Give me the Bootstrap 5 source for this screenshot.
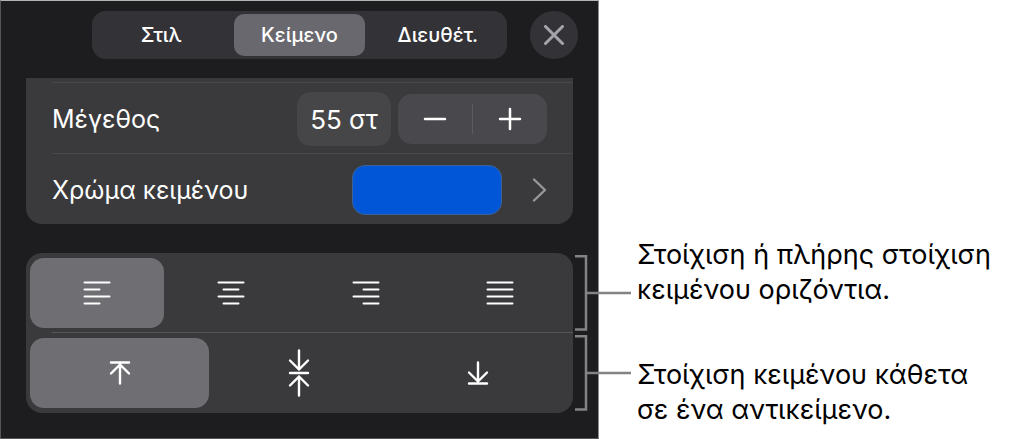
<!DOCTYPE html>
<html lang="el">
<head>
<meta charset="utf-8">
<meta name="viewport" content="width=device-width, initial-scale=1">
<title>Στοίχιση κειμένου</title>
<link rel="stylesheet" href="https://cdn.jsdelivr.net/npm/bootstrap@5.3.0/dist/css/bootstrap.min.css">
<style>
  body { font-family: Inter, "Noto Sans", sans-serif; font-size: 25px; line-height: 35px; color: #000; background: #fff; }
  svg { display: block; fill: none; stroke: currentColor; stroke-linecap: round; stroke-linejoin: round; }
  button { border: 0; padding: 0; background: transparent; color: #fff; }
  .figure-grid { display: grid; grid-template-columns: 599fr 412fr; }
  .inspector { background: #1d1d1f; color: #fff; border: 1px solid #56565a; border-top-color: #b0b6b8; border-right-color: #8c8c8e; padding: 10px 25px 25px; }
  .inspector-head { padding-left: 66px; margin-right: -5px; gap: 23px; }
  .tabs-box { background: #333236; border-radius: 14px; padding: 3px 0; height: 48px; }
  .tabs-box button { margin: 0 4px; border-radius: 10px; font-size: 20px; font-weight: 500; line-height: 24px; flex: 1 1 0; }
  .tabs-box .active { background: #69686f; }
  .close-btn { width: 48px; height: 48px; background: #333236; color: #a5a4ac; }
  .panel-box { background: #3a3a3c; }
  .text-box { margin-top: 19px; padding-top: 4px; border-radius: 0 0 16px 16px; }
  .text-row { margin-left: 26px; padding: 2px 26px 0 0; height: 71px; border-top: 1px solid #48484a; }
  .size-input { width: 94px; height: 54px; border: 0; border-radius: 14px; background: #464649; color: #fff; text-align: center; padding: 0; margin-right: 7px; font-size: 26px; }
  .stepper { width: 149px; height: 50px; border-radius: 14px; background: #49484d; }
  .stepper-line { width: 1px; height: 30px; background: #5c5b60; }
  .swatch { width: 150px; height: 50px; border-radius: 13px; background: #0056d6; border: 1px solid #3e6292; margin-right: 30px; }
  .chevron { color: #98989c; }
  .align-box { margin-top: 29px; border-radius: 16px; }
  .align-row { position: relative; padding: 5px 6px 4px 4px; }
  .align-row:last-child { padding-bottom: 5px; }
  .align-row button { height: 70px; border-radius: 14px; flex: 1 1 0; }
  .align-row .active { background: #6f6e73; }
  .row-line { height: 1px; margin-left: 26px; background: #555557; }
  .bracket { position: absolute; left: 100%; top: 2px; margin-left: 2px; color: #838383; stroke-linecap: butt; stroke-linejoin: miter; }
  .callouts { padding: 237px 0 0 38px; gap: 50px; font-size: 27px; }
</style>
</head>
<body>
<main class="figure-grid">
  <section class="inspector" aria-label="Μορφή">
    <div class="inspector-head d-flex align-items-center">
      <nav class="tabs-box d-flex flex-grow-1">
        <button type="button">Στιλ</button>
        <button type="button" class="active">Κείμενο</button>
        <button type="button">Διευθέτ.</button>
      </nav>
      <button type="button" class="close-btn rounded-circle d-flex align-items-center justify-content-center" aria-label="Κλείσιμο">
        <svg width="20" height="20" stroke-width="3"><path d="M1.500 1.500 18.500 18.500M18.500 1.500 1.500 18.500"/></svg>
      </button>
    </div>

    <div class="panel-box text-box">
      <div class="text-row d-flex align-items-center">
        <label for="size" class="me-auto">Μέγεθος</label>
        <input id="size" class="size-input" type="text" value="55 στ">
        <div class="stepper d-flex align-items-center">
          <button type="button" class="flex-fill h-100 d-flex align-items-center justify-content-center" aria-label="Μείωση"><svg width="24" height="24" stroke-width="2.500"><path d="M2 12H22"/></svg></button>
          <span class="stepper-line"></span>
          <button type="button" class="flex-fill h-100 d-flex align-items-center justify-content-center" aria-label="Αύξηση"><svg width="24" height="24" stroke-width="2.500"><path d="M2 12H22M12 2V22"/></svg></button>
        </div>
      </div>
      <div class="text-row d-flex align-items-center">
        <span class="me-auto">Χρώμα κειμένου</span>
        <button type="button" class="swatch" aria-label="Χρώμα κειμένου"></button>
        <button type="button" class="chevron" aria-label="Επιλογές χρώματος"><svg width="15" height="26" stroke-width="2.400"><path d="M2 2.500 13 13 2 23.500"/></svg></button>
      </div>
    </div>

    <div class="panel-box align-box">
      <div class="align-row d-flex">
        <button type="button" class="active d-flex align-items-center justify-content-center" aria-label="Αριστερά"><svg width="28" height="24" stroke-width="2"><path d="M1.500 1.500H26.500M1.500 8.500H16.500M1.500 15.500H26.500M1.500 22.500H16.500"/></svg></button>
        <button type="button" class="d-flex align-items-center justify-content-center" aria-label="Κέντρο"><svg width="28" height="24" stroke-width="2"><path d="M1.500 1.500H26.500M6.500 8.500H21.500M1.500 15.500H26.500M6.500 22.500H21.500"/></svg></button>
        <button type="button" class="d-flex align-items-center justify-content-center" aria-label="Δεξιά"><svg width="28" height="24" stroke-width="2"><path d="M1.500 1.500H26.500M11.500 8.500H26.500M1.500 15.500H26.500M11.500 22.500H26.500"/></svg></button>
        <button type="button" class="d-flex align-items-center justify-content-center" aria-label="Πλήρης"><svg width="28" height="24" stroke-width="2"><path d="M1.500 1.500H26.500M1.500 8.500H26.500M1.500 15.500H26.500M1.500 22.500H26.500"/></svg></button>
        <svg class="bracket" width="56" height="76" stroke-width="2.500"><path d="M0 1.250H11V74.500H0M11 38H56"/></svg>
      </div>
      <div class="row-line"></div>
      <div class="align-row d-flex">
        <button type="button" class="active d-flex align-items-center justify-content-center" aria-label="Πάνω"><svg width="22" height="26" stroke-width="2.400"><path d="M2 2.500H20M11 23.500V5M2 13.500 11 4.500 20 13.500"/></svg></button>
        <button type="button" class="d-flex align-items-center justify-content-center" aria-label="Μέση"><svg width="22" height="48" stroke-width="2.400"><path d="M2 24H20M11 1.500V20.500M2 11.500 11 20.500 20 11.500M11 46.500V27.500M2 36.500 11 27.500 20 36.500"/></svg></button>
        <button type="button" class="d-flex align-items-center justify-content-center" aria-label="Κάτω"><svg width="22" height="26" stroke-width="2.400"><path d="M2 23.500H20M11 2.500V21M2 12.500 11 21.500 20 12.500"/></svg></button>
        <svg class="bracket" width="56" height="76" stroke-width="2.500"><path d="M0 1.250H11V74.500H0M11 38H56"/></svg>
      </div>
    </div>
  </section>

  <aside class="callouts d-flex flex-column">
    <p class="mb-0">Στοίχιση ή πλήρης στοίχιση<br>κειμένου οριζόντια.</p>
    <p class="mb-0">Στοίχιση κειμένου κάθετα<br>σε ένα αντικείμενο.</p>
  </aside>
</main>
<script src="https://cdn.jsdelivr.net/npm/bootstrap@5.3.0/dist/js/bootstrap.bundle.min.js"></script>
</body>
</html>
